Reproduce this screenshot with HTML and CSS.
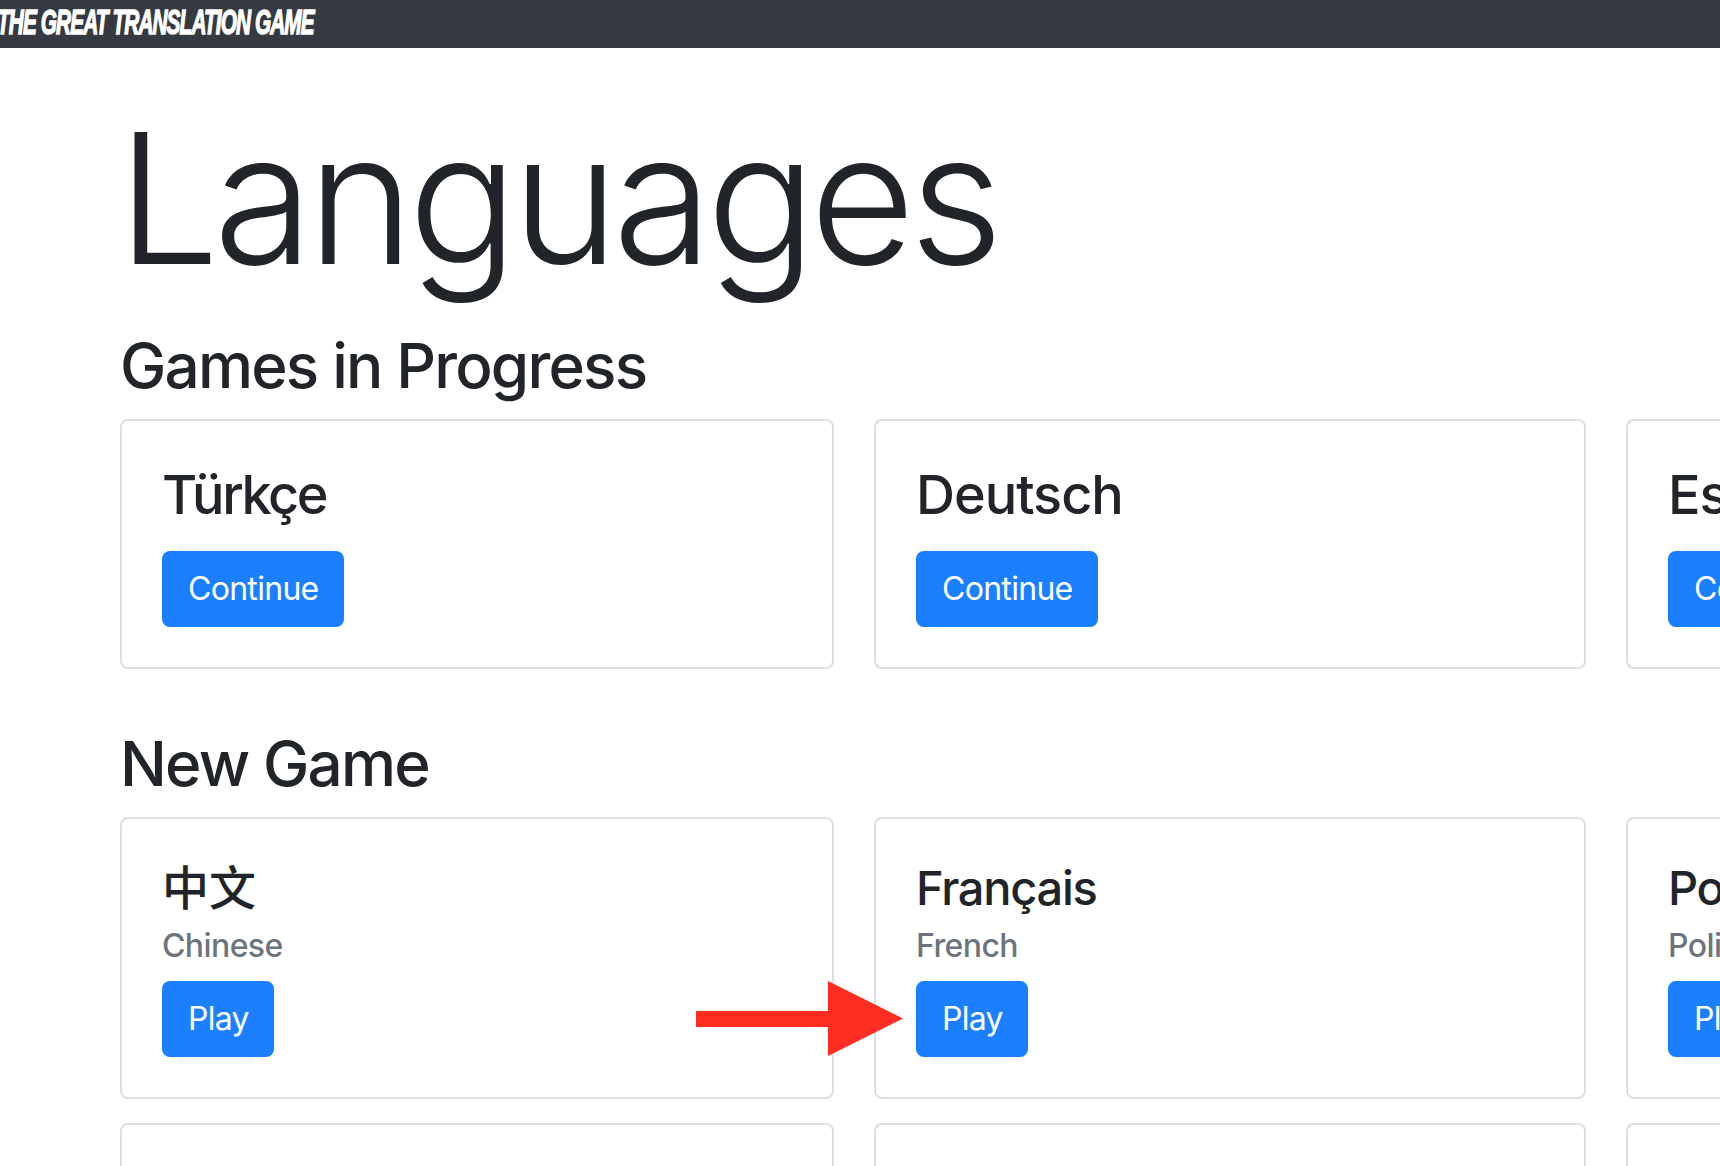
FILE: index.html
```html
<!DOCTYPE html>
<html lang="en">
<head>
<meta charset="utf-8">
<title>Languages</title>
<link rel="stylesheet" href="styles.css">
</head>
<body>
<nav class="navbar"><a class="brand">THE GREAT TRANSLATION GAME</a></nav>
<main class="main">
  <h1 class="display">Languages</h1>
  <h2 class="section-title">Games in Progress</h2>
  <div class="deck deck-progress">
    <div class="card"><h3 class="card-title title-tight">Türkçe</h3><a class="btn">Continue</a></div>
    <div class="card"><h3 class="card-title">Deutsch</h3><a class="btn">Continue</a></div>
    <div class="card"><h3 class="card-title">Español</h3><a class="btn">Continue</a></div>
  </div>
  <h2 class="section-title">New Game</h2>
  <div class="deck">
    <div class="card"><h4 class="card-name name-cjk">中文</h4><h6 class="card-sub">Chinese</h6><a class="btn">Play</a></div>
    <div class="card"><h4 class="card-name">Français</h4><h6 class="card-sub">French</h6><a class="btn">Play</a></div>
    <div class="card"><h4 class="card-name">Polski</h4><h6 class="card-sub">Polish</h6><a class="btn">Play</a></div>
    <div class="card card-empty"></div>
    <div class="card card-empty"></div>
    <div class="card card-empty"></div>
  </div>
</main>
<svg class="arrow" width="207" height="75" viewBox="0 0 207 75" aria-hidden="true"><path d="M0 30H132V0L207 37.5L132 75V46H0Z" fill="#ff2d1f"/></svg>
</body>
</html>
```
FILE: styles.css
```css
html, body { margin: 0; padding: 0; height: 1166px; overflow: hidden; background: #fff; }
body { position: relative; font-family: Inter, "Noto Sans CJK SC", "Liberation Sans", sans-serif; color: #212529; }
.navbar { height: 48px; background: #343a40; overflow: hidden; }
.brand { display: block; width: max-content; margin-left: -3px; padding-top: 3px; font: italic 700 35px/38px "Liberation Sans Narrow", "Liberation Sans", sans-serif; color: #fff; transform: scaleX(.594); transform-origin: left center; letter-spacing: -1.5px; -webkit-text-stroke: 1.4px #fff; }
.main { padding: 0 0 0 120px; width: 1700px; }
.display { margin: 35px 0 14px -3px; font-size: 182px; line-height: 230px; font-weight: 300; letter-spacing: -6.2px; }
.section-title { margin: 0 0 15px; font-size: 62px; line-height: 77px; font-weight: 500; letter-spacing: -1.8px; }
.deck { display: grid; grid-template-columns: 714px 712px 714px; column-gap: 40px; row-gap: 24px; }
.deck-progress { margin-bottom: 56px; }
.card { box-sizing: border-box; padding: 40px; border: 2px solid #dfdfdf; border-radius: 8px; }
.card-empty { height: 280px; }
.card-title { margin: 0 0 23px; font-size: 54px; line-height: 67px; font-weight: 500; letter-spacing: -1px; }
.title-tight { letter-spacing: -2.4px; }
.card-name { margin: 0 0 10px; font-size: 47px; line-height: 58px; font-weight: 500; letter-spacing: -1.3px; }
.name-cjk { letter-spacing: 0; }
.card-sub { margin: 0 0 16px; font-size: 32px; line-height: 38px; font-weight: 500; color: #6c757d; letter-spacing: -.6px; }
.btn { display: inline-block; padding: 14px 25px 14px 26px; font-size: 32px; line-height: 48px; color: #fff; background: #1a80ff; border-radius: 8px; letter-spacing: -.7px; }
.arrow { position: absolute; left: 696px; top: 981px; }
```
